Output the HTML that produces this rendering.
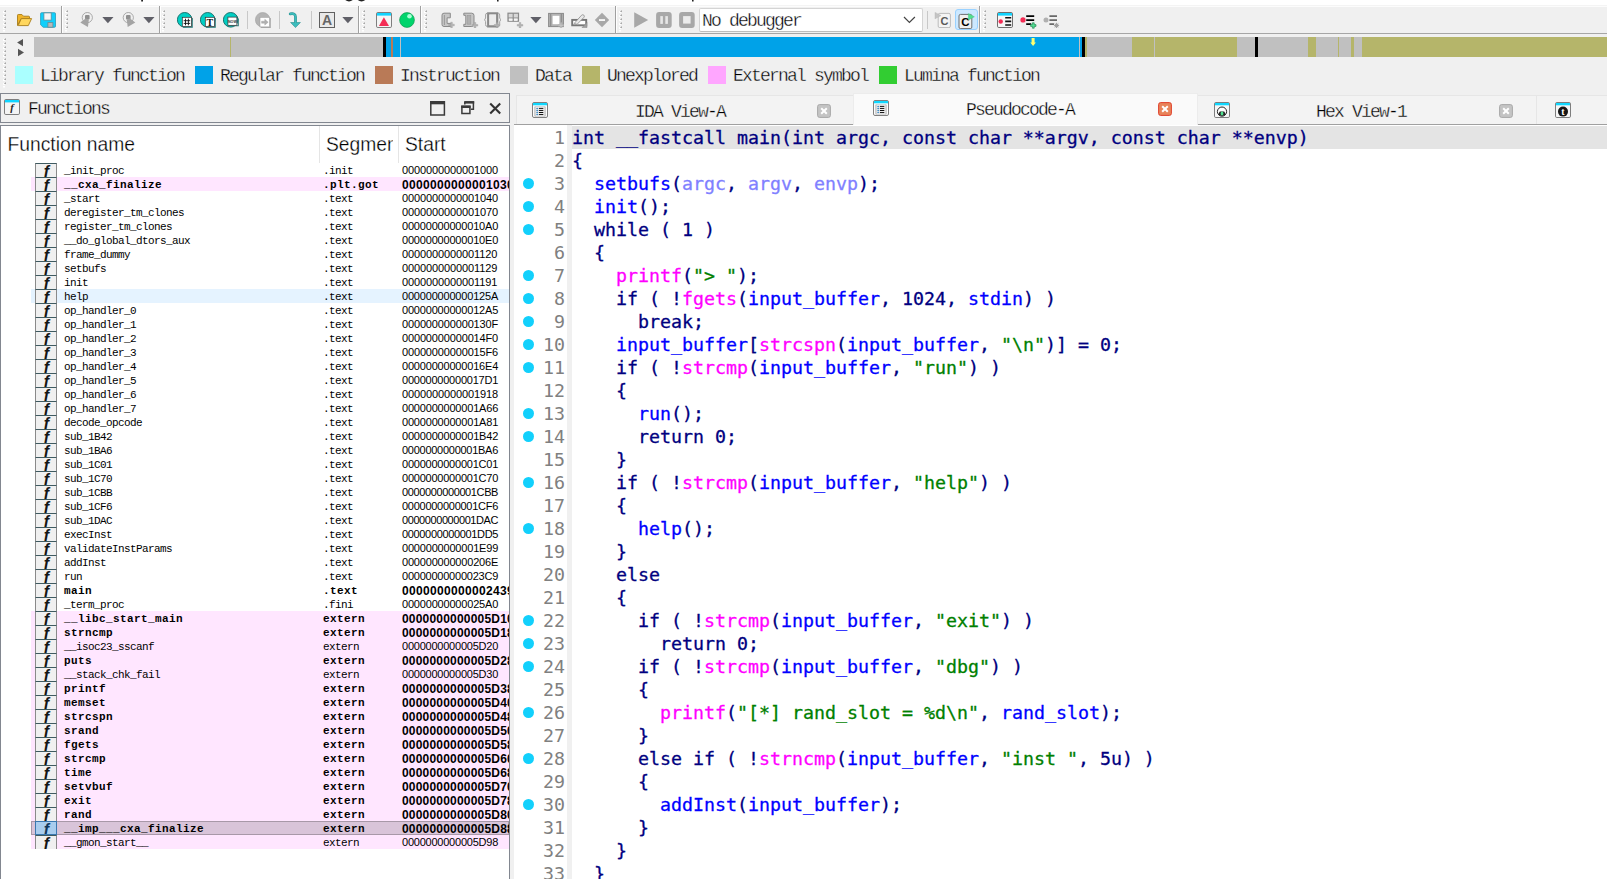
<!DOCTYPE html>
<html lang="en"><head><meta charset="utf-8"><title>IDA - main pseudocode</title>
<style>
html,body{margin:0;padding:0}
body{width:1607px;height:879px;overflow:hidden;background:#f0f0f0;position:relative;font-family:"Liberation Mono",monospace;color:#000}
div,span,i,svg{position:absolute;display:block;box-sizing:border-box}
i{font-style:normal}
#topstrip{left:0;top:0;width:1607px;height:5px;background:#fff}
#tbline{left:0;top:33px;width:1607px;height:1px;background:#a6a6a6}
.vsep{top:6px;width:2px;height:27px;border-left:1px solid #a0a0a0;border-right:1px solid #fff}
.tsep{top:11px;width:1px;height:18px;background:#c8c8c8}
.grip{width:3px;height:22px;top:9px}
.ui{font-family:"Liberation Mono",monospace;font-size:18px;letter-spacing:-1.8px;line-height:18px;white-space:pre;color:#000;-webkit-text-stroke:0.35px #f0f0f0}
/* nav band */
#nav{left:34px;top:37px;width:1573px;height:20px;background:#c0c0c0}
#nav i{top:0;height:20px}
/* legend */
#legend{left:0;top:0;width:1607px;height:0}
.sw{top:66px;width:18px;height:18px}
/* functions panel */
#ftitle{left:0;top:93px;width:510px;height:30px;border:1px solid #828790;background:#f0f0f0}
#flist{left:0;top:125px;width:510px;height:760px;border:1px solid #828790;background:#fff}
.hd{font-family:"Liberation Sans",sans-serif;font-size:19.3px;line-height:22px;top:134px;white-space:pre;color:#000;-webkit-text-stroke:0.3px #fff}
.hsep{top:126px;width:1px;height:37px;background:#e5e5e5}
#rows{left:0;top:0;width:509px;height:879px;overflow:hidden;clip-path:inset(0 0 0 0)}
.r{left:31px;width:478px;height:14px;font-size:11px;letter-spacing:-0.6px;line-height:14px;white-space:pre;overflow:hidden}
.r.pink{background:#ffe6ff}
.r.hl{background:#e5f3ff}
.r.sel{background:#d9c4d9;box-shadow:inset 0 0 0 1px #a898a8}
.r span{top:1px;height:14px}
.r .n{left:33px}
.r .sg{left:292px}
.r .a{left:371px;font-family:"Liberation Sans",sans-serif;font-size:11px;letter-spacing:-0.12px}
.r .a{margin-top:-1px}
.r.b .a{font-size:12px;letter-spacing:0.33px;margin-top:0}
.r.b{font-weight:bold;font-size:11px;letter-spacing:0.4px}
.fi{left:4px;top:0;width:22px;height:14px;border-left:1px solid #8a8a8a;border-right:1px solid #8a8a8a;border-top:1px solid #3f5a60;background:#f0f0f0;font-family:"Liberation Sans",sans-serif;font-style:italic;font-weight:bold;font-size:16px;line-height:15px;text-align:center;letter-spacing:0;color:#151515;overflow:hidden;padding-left:1px}
.r.sel .fi{background:#a9cdee;border-color:#3a78b0;border-bottom:1px solid #3a78b0;color:#12385a}
/* tabs */
.tab{top:95px;height:29px;background:#f3f3f3;border-top:1px solid #e6e6e6;border-left:1px solid #e6e6e6}
.tab.act{top:93px;height:33px;background:#fafafa;border:1px solid #ececec;border-bottom:none}
#tabline{left:514px;top:124px;width:1093px;height:1px;background:#a0a0a0}
/* code */
#code{left:514px;top:125px;width:1093px;height:754px;background:#fff}
#gut{left:53px;top:0;width:5px;height:754px;background:#f0f0f0}
.ln{left:-514px;width:1607px;height:23px;margin-top:-125px;font-family:"DejaVu Sans Mono","Liberation Mono",monospace;font-size:18.27px;line-height:23px;white-space:pre}
.ln.l1 .tx{background:#e4e4e4;width:1035px}
.ln .tx{left:572px;top:0;height:23px;-webkit-text-stroke:0.3px}
.ln .tx span{position:static;display:inline}
.ln .no{left:520px;width:45px;text-align:right;color:#808080;top:0;height:23px}
.dot{left:523px;top:6px;width:11px;height:11px;border-radius:50%;background:#12d0fc}
.k{color:#000080}.f{color:#ff00ff}.g{color:#0000ff}.s{color:#008000}.p{color:#8080ff}
#combo{left:699px;top:8px;width:224px;height:24px;background:#fff;border:1px solid #d4d4d4;border-bottom-color:#bdbdbd;border-radius:2px}
#cact{left:955px;top:9px;width:23px;height:21px;background:#cce8ff;border:1px solid #99d1ff;border-radius:3px}
#tbhl{left:0;top:5px;width:1607px;height:2px;background:#fcfcfc;border-top:1px solid #f4f4f4}

</style></head>
<body>
<div id="topstrip"></div>
<svg style="left:0px;top:0px" width="800" height="3" viewBox="0 0 800 3"><path d="M141.2 0h1.8v1.6h-1.800z M497 0h1.600v1.400h-1.600z M692 0h1.600v1.400h-1.600z" fill="#222"/><path d="M344.500 -1.500q4.500 4.500 9 0M357 -1.500q4.500 4.500 9 0" fill="none" stroke="#222" stroke-width="1.300"/></svg>
<svg style="left:3.2px;top:9px" width="4" height="24" viewBox="0 0 4 24"><rect x="0" y="2" width="2" height="2" fill="#fff"/><path d="M2.900 0.9v2h-2z" fill="#9c9c9c"/><rect x="0" y="6" width="2" height="2" fill="#fff"/><path d="M2.900 4.9v2h-2z" fill="#9c9c9c"/><rect x="0" y="10" width="2" height="2" fill="#fff"/><path d="M2.900 8.9v2h-2z" fill="#9c9c9c"/><rect x="0" y="14" width="2" height="2" fill="#fff"/><path d="M2.900 12.9v2h-2z" fill="#9c9c9c"/><rect x="0" y="18" width="2" height="2" fill="#fff"/><path d="M2.900 16.9v2h-2z" fill="#9c9c9c"/><rect x="0" y="21" width="2" height="1.5" fill="#fff"/></svg>
<svg style="left:3.2px;top:37px" width="4" height="52" viewBox="0 0 4 52"><rect x="0" y="2" width="2" height="2" fill="#fff"/><path d="M2.900 0.9v2h-2z" fill="#9c9c9c"/><rect x="0" y="6" width="2" height="2" fill="#fff"/><path d="M2.900 4.9v2h-2z" fill="#9c9c9c"/><rect x="0" y="10" width="2" height="2" fill="#fff"/><path d="M2.900 8.9v2h-2z" fill="#9c9c9c"/><rect x="0" y="14" width="2" height="2" fill="#fff"/><path d="M2.900 12.9v2h-2z" fill="#9c9c9c"/><rect x="0" y="18" width="2" height="2" fill="#fff"/><path d="M2.900 16.9v2h-2z" fill="#9c9c9c"/><rect x="0" y="22" width="2" height="2" fill="#fff"/><path d="M2.900 20.9v2h-2z" fill="#9c9c9c"/><rect x="0" y="26" width="2" height="2" fill="#fff"/><path d="M2.900 24.9v2h-2z" fill="#9c9c9c"/><rect x="0" y="30" width="2" height="2" fill="#fff"/><path d="M2.900 28.9v2h-2z" fill="#9c9c9c"/><rect x="0" y="34" width="2" height="2" fill="#fff"/><path d="M2.900 32.9v2h-2z" fill="#9c9c9c"/><rect x="0" y="38" width="2" height="2" fill="#fff"/><path d="M2.900 36.9v2h-2z" fill="#9c9c9c"/><rect x="0" y="42" width="2" height="2" fill="#fff"/><path d="M2.900 40.9v2h-2z" fill="#9c9c9c"/><rect x="0" y="46" width="2" height="2" fill="#fff"/><path d="M2.900 44.9v2h-2z" fill="#9c9c9c"/><rect x="0" y="49" width="2" height="1.5" fill="#fff"/></svg>
<i id="tbhl"></i><svg style="left:16px;top:13px" width="17" height="14" viewBox="0 0 17 14"><path d="M1.5 12.5V2.3q0-.8.8-.8h3.6l1.6 1.7h5.2q.8 0 .8.8v1.5H5.2L1.5 12.5z" fill="#f0b428" stroke="#a87d18" stroke-width=".9" stroke-linejoin="round"/><path d="M2.2 12.6L5.3 5.6h10.3l-3.3 7z" fill="#ffd75e" stroke="#a87d18" stroke-width=".9" stroke-linejoin="round"/></svg>
<svg style="left:40px;top:12px" width="16" height="16" viewBox="0 0 16 16"><path d="M1.5 .7h13q1 0 1 1v12.6q0 1-1 1H3.2L.6 12.8V1.7q0-1 .9-1z" fill="#10d0fc" stroke="#2a9ab8" stroke-width=".8"/><rect x="3.9" y=".9" width="7.3" height="7.2" fill="#f4f4f4" stroke="#5a8a98" stroke-width=".8"/><rect x="7.9" y="10.6" width="5" height="4.6" fill="#b8b8b8" stroke="#6a8a94" stroke-width=".8"/></svg>
<i class="vsep" style="left:61px"></i>
<svg style="left:65.2px;top:9px" width="4" height="24" viewBox="0 0 4 24"><rect x="0" y="2" width="2" height="2" fill="#fff"/><path d="M2.900 0.9v2h-2z" fill="#9c9c9c"/><rect x="0" y="6" width="2" height="2" fill="#fff"/><path d="M2.900 4.9v2h-2z" fill="#9c9c9c"/><rect x="0" y="10" width="2" height="2" fill="#fff"/><path d="M2.900 8.9v2h-2z" fill="#9c9c9c"/><rect x="0" y="14" width="2" height="2" fill="#fff"/><path d="M2.900 12.9v2h-2z" fill="#9c9c9c"/><rect x="0" y="18" width="2" height="2" fill="#fff"/><path d="M2.900 16.9v2h-2z" fill="#9c9c9c"/><rect x="0" y="21" width="2" height="1.5" fill="#fff"/></svg>
<svg style="left:79.5px;top:11.8px" width="14" height="16" viewBox="0 0 14 16"><circle cx="7.3" cy="5.6" r="5.1" fill="none" stroke="#8c8c8c" stroke-width=".7"/><rect x="5" y="3" width="4.6" height="4.6" rx="1" fill="#909090"/><path d="M5.6 6.5L8.9 7.6 7.9 15 .3 10.4z" fill="#a4a4a4"/></svg>
<svg style="left:101.6px;top:17px" width="12" height="7" viewBox="0 0 12 7"><path d="M0.3 0h11.2L5.9 6.2z" fill="#606068"/></svg>
<svg style="left:122.3px;top:11.8px" width="14" height="16" viewBox="0 0 14 16"><g transform="translate(13.6,0) scale(-1,1)"><circle cx="7.3" cy="5.6" r="5.1" fill="none" stroke="#8c8c8c" stroke-width=".7"/><rect x="5" y="3" width="4.6" height="4.6" rx="1" fill="#909090"/><path d="M5.6 6.5L8.9 7.6 7.9 15 .3 10.4z" fill="#a4a4a4"/></g></svg>
<svg style="left:142.7px;top:17px" width="12" height="7" viewBox="0 0 12 7"><path d="M0.3 0h11.2L5.9 6.2z" fill="#606068"/></svg>
<i class="vsep" style="left:159px"></i>
<svg style="left:162.2px;top:9px" width="4" height="24" viewBox="0 0 4 24"><rect x="0" y="2" width="2" height="2" fill="#fff"/><path d="M2.900 0.9v2h-2z" fill="#9c9c9c"/><rect x="0" y="6" width="2" height="2" fill="#fff"/><path d="M2.900 4.9v2h-2z" fill="#9c9c9c"/><rect x="0" y="10" width="2" height="2" fill="#fff"/><path d="M2.900 8.9v2h-2z" fill="#9c9c9c"/><rect x="0" y="14" width="2" height="2" fill="#fff"/><path d="M2.900 12.9v2h-2z" fill="#9c9c9c"/><rect x="0" y="18" width="2" height="2" fill="#fff"/><path d="M2.900 16.9v2h-2z" fill="#9c9c9c"/><rect x="0" y="21" width="2" height="1.5" fill="#fff"/></svg>
<svg style="left:177px;top:12px" width="16" height="16" viewBox="0 0 16 16"><circle cx="7.7" cy="7.8" r="7.3" fill="#00cfc4" stroke="#1a7470" stroke-width="1"/><rect x="6" y="6" width="9.8" height="9.8" fill="#2f7f7f"/><rect x="5.3" y="5.3" width="9.2" height="9.2" fill="#fff" stroke="#333" stroke-width=".7"/><path d="M8.5 6.7v6.6M11.4 6.7v6.6M6.7 8.7h6.5M6.7 11.4h6.5" stroke="#111" stroke-width=".9"/></svg>
<svg style="left:200px;top:12px" width="16" height="16" viewBox="0 0 16 16"><circle cx="7.7" cy="7.8" r="7.3" fill="#00cfc4" stroke="#1a7470" stroke-width="1"/><rect x="6" y="6" width="9.8" height="9.8" fill="#2f7f7f"/><rect x="5.3" y="5.3" width="9.2" height="9.2" fill="#fff" stroke="#333" stroke-width=".7"/><text x="9.9" y="13.6" font-family="Liberation Serif,serif" font-size="10" font-weight="bold" text-anchor="middle" fill="#111">T</text></svg>
<svg style="left:223px;top:12px" width="16" height="16" viewBox="0 0 16 16"><circle cx="7.7" cy="7.8" r="7.3" fill="#00cfc4" stroke="#1a7470" stroke-width="1"/><path d="M5 14.2h10.8V6.5h-1v6.7H5z" fill="#2f7f7f"/><rect x="4.9" y="5.1" width="9" height="8.2" fill="#fff" stroke="#333" stroke-width=".7"/><text x="9.4" y="10.6" font-family="Liberation Sans,sans-serif" font-size="3.6" font-weight="bold" text-anchor="middle" fill="#333">NOW</text></svg>
<i class="tsep" style="left:247px"></i>
<svg style="left:255px;top:12px" width="16" height="16" viewBox="0 0 16 16"><circle cx="7.7" cy="7.8" r="7.3" fill="#b4b4b4" stroke="#a0a0a0" stroke-width=".6"/><rect x="5.8" y="6" width="10" height="10" fill="#a8a8a8"/><rect x="5" y="5.3" width="9.6" height="9.6" fill="#fff" stroke="#a0a0a0" stroke-width=".6"/><path d="M6.6 9.2h3.2V7.3l3.4 2.9-3.4 2.9v-1.9H6.6z" fill="#b0b0b0" stroke="#999" stroke-width=".4"/></svg>
<i class="tsep" style="left:279px"></i>
<svg style="left:288px;top:12px" width="14" height="16" viewBox="0 0 14 16"><path d="M2.200 1.900q5.300-1 5.300 3.200v6" fill="none" stroke="#2a8f8f" stroke-width="2.700" stroke-linecap="round"/><path d="M2.600 10.500h9.800L7.500 15.600z" fill="#3cbcbc" stroke="#2a8f8f" stroke-width=".6" stroke-linejoin="round"/><path d="M2.200 1.900q5.300-1 5.300 3.200v6" fill="none" stroke="#3cbcbc" stroke-width="1.700" stroke-linecap="round"/></svg>
<i class="tsep" style="left:311px"></i>
<svg style="left:319px;top:12px" width="16" height="16" viewBox="0 0 16 16"><rect x=".5" y=".5" width="15" height="15" fill="#e9e9e9" stroke="#606060" stroke-width="1"/><text x="8" y="13.2" font-family="Liberation Sans,sans-serif" font-size="14" font-weight="bold" text-anchor="middle" fill="#666">A</text></svg>
<svg style="left:341.5px;top:17px" width="12" height="7" viewBox="0 0 12 7"><path d="M0.3 0h11.2L5.9 6.2z" fill="#606068"/></svg>
<i class="vsep" style="left:358px"></i>
<svg style="left:362.2px;top:9px" width="4" height="24" viewBox="0 0 4 24"><rect x="0" y="2" width="2" height="2" fill="#fff"/><path d="M2.900 0.9v2h-2z" fill="#9c9c9c"/><rect x="0" y="6" width="2" height="2" fill="#fff"/><path d="M2.900 4.9v2h-2z" fill="#9c9c9c"/><rect x="0" y="10" width="2" height="2" fill="#fff"/><path d="M2.900 8.9v2h-2z" fill="#9c9c9c"/><rect x="0" y="14" width="2" height="2" fill="#fff"/><path d="M2.900 12.9v2h-2z" fill="#9c9c9c"/><rect x="0" y="18" width="2" height="2" fill="#fff"/><path d="M2.900 16.9v2h-2z" fill="#9c9c9c"/><rect x="0" y="21" width="2" height="1.5" fill="#fff"/></svg>
<svg style="left:376px;top:12px" width="16" height="16" viewBox="0 0 16 16"><rect x=".5" y=".5" width="15" height="15" rx="1.3" fill="#f4f4f4" stroke="#707070" stroke-width=".9"/><rect x="1" y="1" width="14" height="2.6" fill="#10d4ff"/><path d="M7.9 5.3L13 13.9H2.9z" fill="#f42d55"/></svg>
<svg style="left:399px;top:12px" width="16" height="16" viewBox="0 0 16 16"><circle cx="8" cy="8" r="7.4" fill="#00d46c" stroke="#109a50" stroke-width=".7"/><circle cx="10.5" cy="4.2" r="2.3" fill="#a8ffd4"/></svg>
<i class="vsep" style="left:420px"></i>
<svg style="left:424.2px;top:9px" width="4" height="24" viewBox="0 0 4 24"><rect x="0" y="2" width="2" height="2" fill="#fff"/><path d="M2.900 0.9v2h-2z" fill="#9c9c9c"/><rect x="0" y="6" width="2" height="2" fill="#fff"/><path d="M2.900 4.9v2h-2z" fill="#9c9c9c"/><rect x="0" y="10" width="2" height="2" fill="#fff"/><path d="M2.900 8.9v2h-2z" fill="#9c9c9c"/><rect x="0" y="14" width="2" height="2" fill="#fff"/><path d="M2.900 12.9v2h-2z" fill="#9c9c9c"/><rect x="0" y="18" width="2" height="2" fill="#fff"/><path d="M2.900 16.9v2h-2z" fill="#9c9c9c"/><rect x="0" y="21" width="2" height="1.5" fill="#fff"/></svg>
<svg style="left:441px;top:12px" width="16" height="16" viewBox="0 0 16 16"><path d="M1 3.2q0-2 2-2h6.3v4.6H6.1v5.6h3.4v3.1H3q-2 0-2-2z" fill="#c6c6c6" stroke="#8a8a8a" stroke-width="1"/><path d="M3.4 3v10" stroke="#9a9a9a" stroke-width="1"/><path d="M7.7 12.2h2v-2h1.6v2h2v1.6h-2v2h-1.6v-2h-2z" fill="#b4b4b4" stroke="#9a9a9a" stroke-width=".4"/></svg>
<svg style="left:463px;top:12px" width="16" height="16" viewBox="0 0 16 16"><path d="M.8 1.2h8q2.2 0 2.2 2.4v8.6q0 2.3-2.2 2.3h-8v-2.2h2v-9h-2z" fill="#c6c6c6" stroke="#8a8a8a" stroke-width="1"/><rect x="4.6" y="3.4" width="3.2" height="8.8" fill="#b0b0b0" stroke="#9a9a9a" stroke-width=".6"/><path d="M9.2 12.5h2v-2h1.6v2h2v1.6h-2v2h-1.6v-2h-2z" fill="#b4b4b4" stroke="#9a9a9a" stroke-width=".4"/></svg>
<svg style="left:484px;top:12px" width="17" height="16" viewBox="0 0 17 16"><path d="M4.2 1.3h9v13h-9z" fill="none" stroke="#8a8a8a" stroke-width="2.2"/><path d="M3 1.3Q1.6 1.3 1.6 3v3L.6 7.8l1 1.8v3q0 1.8 1.4 1.8M14.3 1.3q1.4 0 1.4 1.700v3l1 1.800-1 1.8v3q0 1.800-1.400 1.800" fill="none" stroke="#a0a0a0" stroke-width="1"/><rect x="5.4" y="2.6" width="6.600" height="10.4" fill="#ececec"/><path d="M10.2 12.5h2v-2h1.6v2h2v1.6h-2v2h-1.6v-2h-2z" fill="#b4b4b4" stroke="#9a9a9a" stroke-width=".4"/></svg>
<svg style="left:507px;top:12px" width="17" height="16" viewBox="0 0 17 16"><rect x="1" y="1.200" width="10.500" height="8" fill="#d8d8d8" stroke="#8a8a8a" stroke-width="1.200"/><path d="M6.200 1.200v8M1 6h10.500" stroke="#8a8a8a" stroke-width="1.100"/><rect x="2" y="6.600" width="3.400" height="2.200" fill="#f4f4f4"/><rect x="7" y="6.600" width="3.400" height="2.200" fill="#f4f4f4"/><path d="M10.2 12.5h2v-2h1.6v2h2v1.6h-2v2h-1.6v-2h-2z" fill="#b4b4b4" stroke="#9a9a9a" stroke-width=".4"/></svg>
<svg style="left:529.8px;top:17px" width="12" height="7" viewBox="0 0 12 7"><path d="M0.3 0h11.2L5.9 6.2z" fill="#606068"/></svg>
<svg style="left:548px;top:12px" width="16" height="16" viewBox="0 0 16 16"><rect x=".6" y="1.400" width="14.800" height="13.200" fill="#b4b4b4" stroke="#8a8a8a" stroke-width="1"/><path d="M2.600 1.400v13.200M13.400 1.400v13.200" stroke="#8f8f8f" stroke-width="1.400"/><rect x="4.600" y="3.800" width="6.800" height="8.400" fill="#fff"/><path d="M10.2 12.6h2v-2h1.6v2h2v1.6h-2v2h-1.6v-2h-2z" fill="#c4c4c4" stroke="#aaa" stroke-width=".4"/></svg>
<svg style="left:571px;top:12px" width="17" height="16" viewBox="0 0 17 16"><rect x="1.200" y="7.900" width="14" height="5.400" fill="#fff" stroke="#767676" stroke-width="1.900"/><path d="M11 15.600h5v-5z" fill="#a0a0a0" stroke="#808080" stroke-width=".5"/><path d="M3.200 11.400L10.600 3.200q1.300-1 2.300 0t0 2.200L6 12.400z" fill="#e8e8e8" stroke="#8a8a8a" stroke-width=".8"/></svg>
<svg style="left:594px;top:12px" width="16" height="16" viewBox="0 0 16 16"><path d="M8 .8L15.200 8 8 15.200.8 8z" fill="#a8a8a8"/><rect x="5" y="7.200" width="6" height="1.700" fill="#fff"/></svg>
<i class="vsep" style="left:615px"></i>
<svg style="left:619.2px;top:9px" width="4" height="24" viewBox="0 0 4 24"><rect x="0" y="2" width="2" height="2" fill="#fff"/><path d="M2.900 0.9v2h-2z" fill="#9c9c9c"/><rect x="0" y="6" width="2" height="2" fill="#fff"/><path d="M2.900 4.9v2h-2z" fill="#9c9c9c"/><rect x="0" y="10" width="2" height="2" fill="#fff"/><path d="M2.900 8.9v2h-2z" fill="#9c9c9c"/><rect x="0" y="14" width="2" height="2" fill="#fff"/><path d="M2.900 12.9v2h-2z" fill="#9c9c9c"/><rect x="0" y="18" width="2" height="2" fill="#fff"/><path d="M2.900 16.9v2h-2z" fill="#9c9c9c"/><rect x="0" y="21" width="2" height="1.5" fill="#fff"/></svg>
<svg style="left:634px;top:12px" width="15" height="16" viewBox="0 0 15 16"><path d="M.2 .2v15.600L14.200 8z" fill="#a8a8a8"/></svg>
<svg style="left:656px;top:12px" width="16" height="16" viewBox="0 0 16 16"><rect x=".1" y=".1" width="15.600" height="15.800" rx="3" fill="#a8a8a8"/><rect x="4.300" y="4.100" width="2.600" height="7.800" fill="#e6e6e6"/><rect x="9.300" y="4.100" width="2.600" height="7.800" fill="#e6e6e6"/></svg>
<svg style="left:679px;top:12px" width="16" height="16" viewBox="0 0 16 16"><rect x=".1" y=".1" width="15.600" height="15.800" rx="3" fill="#a8a8a8"/><rect x="4.100" y="4.100" width="7.500" height="7.500" fill="#ececec"/></svg>
<div id="combo"></div><span class="ui" style="left:702px;top:12px;-webkit-text-stroke-color:#fff">No debugger</span>
<svg style="left:903px;top:16px" width="13" height="8" viewBox="0 0 13 8"><path d="M1 1l5.400 5.400L11.900 1" fill="none" stroke="#444" stroke-width="1.200"/></svg>
<i class="tsep" style="left:927px"></i>
<svg style="left:934px;top:12px" width="17" height="16" viewBox="0 0 17 16"><rect x="4.200" y="1.400" width="12.200" height="14.200" rx="1.500" fill="#f4f4f4" stroke="#b4b4b4" stroke-width=".9"/><path d="M1 .4v6.400L7 3.600z" fill="#c4c4c4" stroke="#b0b0b0" stroke-width=".4"/><text x="10.500" y="12.500" font-family="Liberation Sans,sans-serif" font-size="11" font-weight="bold" text-anchor="middle" fill="#5a5a5a">C</text></svg>
<div id="cact"></div>
<svg style="left:958px;top:12px" width="18" height="17" viewBox="0 0 18 17"><rect x="1" y="2.400" width="12.800" height="14.200" rx="1.500" fill="#f0f0f0" stroke="#606060" stroke-width=".9"/><text x="7.300" y="13.600" font-family="Liberation Sans,sans-serif" font-size="11.500" font-weight="bold" text-anchor="middle" fill="#000">C</text><path d="M10.400 1.600v6.400l6-3.200z" fill="#50e090" stroke="#40c078" stroke-width=".4"/></svg>
<i class="vsep" style="left:979px"></i>
<svg style="left:983.2px;top:9px" width="4" height="24" viewBox="0 0 4 24"><rect x="0" y="2" width="2" height="2" fill="#fff"/><path d="M2.900 0.9v2h-2z" fill="#9c9c9c"/><rect x="0" y="6" width="2" height="2" fill="#fff"/><path d="M2.900 4.9v2h-2z" fill="#9c9c9c"/><rect x="0" y="10" width="2" height="2" fill="#fff"/><path d="M2.900 8.9v2h-2z" fill="#9c9c9c"/><rect x="0" y="14" width="2" height="2" fill="#fff"/><path d="M2.900 12.9v2h-2z" fill="#9c9c9c"/><rect x="0" y="18" width="2" height="2" fill="#fff"/><path d="M2.900 16.9v2h-2z" fill="#9c9c9c"/><rect x="0" y="21" width="2" height="1.5" fill="#fff"/></svg>
<svg style="left:997px;top:12px" width="16" height="16" viewBox="0 0 16 16"><rect x=".5" y=".5" width="15" height="15" rx="1.300" fill="#f6f6f6" stroke="#606060" stroke-width=".9"/><rect x="1" y="1" width="14" height="2.600" fill="#10d4ff"/><circle cx="3.700" cy="9.500" r="2.200" fill="#f42d55"/><path d="M8.200 5.800h6M8.200 9.400h6M8.200 13h6" stroke="#111" stroke-width="1.600"/></svg>
<svg style="left:1020px;top:12px" width="18" height="17" viewBox="0 0 18 17"><circle cx="3" cy="7.900" r="2.600" fill="#f42d55"/><path d="M6.200 4.100h8M6.200 8.100h8M6.200 12.100h5" stroke="#000" stroke-width="1.800"/><path d="M10.600 12.600h1.800v-1.800h1.800v1.800h1.800v1.800h-1.800v1.800h-1.800v-1.800h-1.800z" fill="#50e090" stroke="#2a8a5a" stroke-width=".7"/></svg>
<svg style="left:1043px;top:12px" width="18" height="17" viewBox="0 0 18 17"><circle cx="3" cy="7.900" r="2.500" fill="#b0b0b0"/><path d="M6.400 4.100h7.600M6.400 8.100h7.600M6.400 12.100h4.600" stroke="#686868" stroke-width="1.700"/><circle cx="13.500" cy="13.400" r="2" fill="#a0a0a0"/><path d="M13.500 10.800v5.200M10.900 13.400h5.200M11.700 11.600l3.600 3.600M15.300 11.600l-3.600 3.600" stroke="#a0a0a0" stroke-width="1"/></svg>
<div id="tbline"></div>
<svg style="left:16px;top:38px" width="9" height="19" viewBox="0 0 9 19"><path d="M7 0.9v7.400L1.100 4.600z M2 10.800v7.500L8 14.500z" fill="#555"/></svg>
<div id="nav">
<i style="left:196px;width:1px;background:#b5b56a"></i>
<i style="left:349px;width:3px;background:#000"></i>
<i style="left:352px;width:696px;background:#00a2e8"></i>
<i style="left:356.5px;width:2px;background:#b97a57"></i>
<i style="left:366px;width:1px;background:#c0c0c0"></i>
<i style="left:1045px;width:1px;background:#c0c0c0"></i>
<i style="left:1048px;width:3px;background:#000"></i>
<i style="left:1051px;width:2px;background:#b5b56a"></i>
<i style="left:1098px;width:105px;background:#b5b56a"></i>
<i style="left:1120px;width:1px;background:#c0c0c0"></i>
<i style="left:1221px;width:3px;background:#000"></i>
<i style="left:1274px;width:8px;background:#b5b56a"></i>
<i style="left:1304px;width:1px;background:#b5b56a"></i>
<i style="left:1317px;width:3px;background:#b5b56a"></i>
<i style="left:1328px;width:245px;background:#b5b56a"></i>
<svg style="left:995.9px;top:1.2px" width="7" height="9" viewBox="0 0 7 9"><path d="M1.600 0h3v4.600h1.300L3.100 7.900 .3 4.600h1.300z" fill="#ffff70"/></svg>
</div>
<div id="legend"><i class="sw" style="left:15px;background:#aaffff"></i><span class="ui" style="left:40px;top:67px">Library function</span><i class="sw" style="left:195px;background:#00a2e8"></i><span class="ui" style="left:220px;top:67px">Regular function</span><i class="sw" style="left:375px;background:#b97a57"></i><span class="ui" style="left:400px;top:67px">Instruction</span><i class="sw" style="left:510px;background:#c0c0c0"></i><span class="ui" style="left:535px;top:67px">Data</span><i class="sw" style="left:582px;background:#b5b56a"></i><span class="ui" style="left:607px;top:67px">Unexplored</span><i class="sw" style="left:708px;background:#ffa6ff"></i><span class="ui" style="left:733px;top:67px">External symbol</span><i class="sw" style="left:879px;background:#32cd32"></i><span class="ui" style="left:904px;top:67px">Lumina function</span></div>
<div id="ftitle"></div>
<span class="ui" style="left:28px;top:100px">Functions</span>
<div id="flist"></div>
<span class="hd" style="left:7.5px">Function name</span>
<span class="hd" style="left:326px;width:67px;overflow:hidden">Segment</span>
<span class="hd" style="left:405px">Start</span>
<i class="hsep" style="left:319px"></i><i class="hsep" style="left:398px"></i>
<div id="rows">
<div class="r" style="top:163px"><i class="fi">f</i><span class="n">_init_proc</span><span class="sg">.init</span><span class="a" style="letter-spacing:-0.12px">0000000000001000</span></div>
<div class="r b pink" style="top:177px"><i class="fi">f</i><span class="n">__cxa_finalize</span><span class="sg">.plt.got</span><span class="a" style="letter-spacing:0.33px">0000000000001030</span></div>
<div class="r" style="top:191px"><i class="fi">f</i><span class="n">_start</span><span class="sg">.text</span><span class="a" style="letter-spacing:-0.12px">0000000000001040</span></div>
<div class="r" style="top:205px"><i class="fi">f</i><span class="n">deregister_tm_clones</span><span class="sg">.text</span><span class="a" style="letter-spacing:-0.12px">0000000000001070</span></div>
<div class="r" style="top:219px"><i class="fi">f</i><span class="n">register_tm_clones</span><span class="sg">.text</span><span class="a" style="letter-spacing:-0.19px">00000000000010A0</span></div>
<div class="r" style="top:233px"><i class="fi">f</i><span class="n">__do_global_dtors_aux</span><span class="sg">.text</span><span class="a" style="letter-spacing:-0.19px">00000000000010E0</span></div>
<div class="r" style="top:247px"><i class="fi">f</i><span class="n">frame_dummy</span><span class="sg">.text</span><span class="a" style="letter-spacing:-0.12px">0000000000001120</span></div>
<div class="r" style="top:261px"><i class="fi">f</i><span class="n">setbufs</span><span class="sg">.text</span><span class="a" style="letter-spacing:-0.12px">0000000000001129</span></div>
<div class="r" style="top:275px"><i class="fi">f</i><span class="n">init</span><span class="sg">.text</span><span class="a" style="letter-spacing:-0.12px">0000000000001191</span></div>
<div class="r hl" style="top:289px"><i class="fi">f</i><span class="n">help</span><span class="sg">.text</span><span class="a" style="letter-spacing:-0.19px">000000000000125A</span></div>
<div class="r" style="top:303px"><i class="fi">f</i><span class="n">op_handler_0</span><span class="sg">.text</span><span class="a" style="letter-spacing:-0.19px">00000000000012A5</span></div>
<div class="r" style="top:317px"><i class="fi">f</i><span class="n">op_handler_1</span><span class="sg">.text</span><span class="a" style="letter-spacing:-0.15px">000000000000130F</span></div>
<div class="r" style="top:331px"><i class="fi">f</i><span class="n">op_handler_2</span><span class="sg">.text</span><span class="a" style="letter-spacing:-0.15px">00000000000014F0</span></div>
<div class="r" style="top:345px"><i class="fi">f</i><span class="n">op_handler_3</span><span class="sg">.text</span><span class="a" style="letter-spacing:-0.15px">00000000000015F6</span></div>
<div class="r" style="top:359px"><i class="fi">f</i><span class="n">op_handler_4</span><span class="sg">.text</span><span class="a" style="letter-spacing:-0.19px">00000000000016E4</span></div>
<div class="r" style="top:373px"><i class="fi">f</i><span class="n">op_handler_5</span><span class="sg">.text</span><span class="a" style="letter-spacing:-0.23px">00000000000017D1</span></div>
<div class="r" style="top:387px"><i class="fi">f</i><span class="n">op_handler_6</span><span class="sg">.text</span><span class="a" style="letter-spacing:-0.12px">0000000000001918</span></div>
<div class="r" style="top:401px"><i class="fi">f</i><span class="n">op_handler_7</span><span class="sg">.text</span><span class="a" style="letter-spacing:-0.19px">0000000000001A66</span></div>
<div class="r" style="top:415px"><i class="fi">f</i><span class="n">decode_opcode</span><span class="sg">.text</span><span class="a" style="letter-spacing:-0.19px">0000000000001A81</span></div>
<div class="r" style="top:429px"><i class="fi">f</i><span class="n">sub_1B42</span><span class="sg">.text</span><span class="a" style="letter-spacing:-0.19px">0000000000001B42</span></div>
<div class="r" style="top:443px"><i class="fi">f</i><span class="n">sub_1BA6</span><span class="sg">.text</span><span class="a" style="letter-spacing:-0.27px">0000000000001BA6</span></div>
<div class="r" style="top:457px"><i class="fi">f</i><span class="n">sub_1C01</span><span class="sg">.text</span><span class="a" style="letter-spacing:-0.23px">0000000000001C01</span></div>
<div class="r" style="top:471px"><i class="fi">f</i><span class="n">sub_1C70</span><span class="sg">.text</span><span class="a" style="letter-spacing:-0.23px">0000000000001C70</span></div>
<div class="r" style="top:485px"><i class="fi">f</i><span class="n">sub_1CBB</span><span class="sg">.text</span><span class="a" style="letter-spacing:-0.38px">0000000000001CBB</span></div>
<div class="r" style="top:499px"><i class="fi">f</i><span class="n">sub_1CF6</span><span class="sg">.text</span><span class="a" style="letter-spacing:-0.27px">0000000000001CF6</span></div>
<div class="r" style="top:513px"><i class="fi">f</i><span class="n">sub_1DAC</span><span class="sg">.text</span><span class="a" style="letter-spacing:-0.42px">0000000000001DAC</span></div>
<div class="r" style="top:527px"><i class="fi">f</i><span class="n">execInst</span><span class="sg">.text</span><span class="a" style="letter-spacing:-0.34px">0000000000001DD5</span></div>
<div class="r" style="top:541px"><i class="fi">f</i><span class="n">validateInstParams</span><span class="sg">.text</span><span class="a" style="letter-spacing:-0.19px">0000000000001E99</span></div>
<div class="r" style="top:555px"><i class="fi">f</i><span class="n">addInst</span><span class="sg">.text</span><span class="a" style="letter-spacing:-0.19px">000000000000206E</span></div>
<div class="r" style="top:569px"><i class="fi">f</i><span class="n">run</span><span class="sg">.text</span><span class="a" style="letter-spacing:-0.23px">00000000000023C9</span></div>
<div class="r b" style="top:583px"><i class="fi">f</i><span class="n">main</span><span class="sg">.text</span><span class="a" style="letter-spacing:0.33px">0000000000002439</span></div>
<div class="r" style="top:597px"><i class="fi">f</i><span class="n">_term_proc</span><span class="sg">.fini</span><span class="a" style="letter-spacing:-0.19px">00000000000025A0</span></div>
<div class="r b pink" style="top:611px"><i class="fi">f</i><span class="n">__libc_start_main</span><span class="sg">extern</span><span class="a" style="letter-spacing:0.20px">0000000000005D10</span></div>
<div class="r b pink" style="top:625px"><i class="fi">f</i><span class="n">strncmp</span><span class="sg">extern</span><span class="a" style="letter-spacing:0.20px">0000000000005D18</span></div>
<div class="r pink" style="top:639px"><i class="fi">f</i><span class="n">__isoc23_sscanf</span><span class="sg">extern</span><span class="a" style="letter-spacing:-0.23px">0000000000005D20</span></div>
<div class="r b pink" style="top:653px"><i class="fi">f</i><span class="n">puts</span><span class="sg">extern</span><span class="a" style="letter-spacing:0.20px">0000000000005D28</span></div>
<div class="r pink" style="top:667px"><i class="fi">f</i><span class="n">__stack_chk_fail</span><span class="sg">extern</span><span class="a" style="letter-spacing:-0.23px">0000000000005D30</span></div>
<div class="r b pink" style="top:681px"><i class="fi">f</i><span class="n">printf</span><span class="sg">extern</span><span class="a" style="letter-spacing:0.20px">0000000000005D38</span></div>
<div class="r b pink" style="top:695px"><i class="fi">f</i><span class="n">memset</span><span class="sg">extern</span><span class="a" style="letter-spacing:0.20px">0000000000005D40</span></div>
<div class="r b pink" style="top:709px"><i class="fi">f</i><span class="n">strcspn</span><span class="sg">extern</span><span class="a" style="letter-spacing:0.20px">0000000000005D48</span></div>
<div class="r b pink" style="top:723px"><i class="fi">f</i><span class="n">srand</span><span class="sg">extern</span><span class="a" style="letter-spacing:0.20px">0000000000005D50</span></div>
<div class="r b pink" style="top:737px"><i class="fi">f</i><span class="n">fgets</span><span class="sg">extern</span><span class="a" style="letter-spacing:0.20px">0000000000005D58</span></div>
<div class="r b pink" style="top:751px"><i class="fi">f</i><span class="n">strcmp</span><span class="sg">extern</span><span class="a" style="letter-spacing:0.20px">0000000000005D60</span></div>
<div class="r b pink" style="top:765px"><i class="fi">f</i><span class="n">time</span><span class="sg">extern</span><span class="a" style="letter-spacing:0.20px">0000000000005D68</span></div>
<div class="r b pink" style="top:779px"><i class="fi">f</i><span class="n">setvbuf</span><span class="sg">extern</span><span class="a" style="letter-spacing:0.20px">0000000000005D70</span></div>
<div class="r b pink" style="top:793px"><i class="fi">f</i><span class="n">exit</span><span class="sg">extern</span><span class="a" style="letter-spacing:0.20px">0000000000005D78</span></div>
<div class="r b pink" style="top:807px"><i class="fi">f</i><span class="n">rand</span><span class="sg">extern</span><span class="a" style="letter-spacing:0.20px">0000000000005D80</span></div>
<div class="r b sel" style="top:821px"><i class="fi">f</i><span class="n">__imp___cxa_finalize</span><span class="sg">extern</span><span class="a" style="letter-spacing:0.20px">0000000000005D88</span></div>
<div class="r pink" style="top:835px"><i class="fi">f</i><span class="n">__gmon_start__</span><span class="sg">extern</span><span class="a" style="letter-spacing:-0.23px">0000000000005D98</span></div>
</div>
<div id="tabline"></div>
<div class="tab" style="left:516px;width:338px"></div>
<div class="tab" style="left:1197px;width:340px"></div>
<div class="tab" style="left:1536px;width:80px"></div>
<div class="tab act" style="left:853px;width:345px"></div>
<span class="ui" style="left:635px;top:103px">IDA View-A</span>
<span class="ui" style="left:966px;top:101px;-webkit-text-stroke-color:#fafafa">Pseudocode-A</span>
<span class="ui" style="left:1316px;top:103px">Hex View-1</span>
<div id="code">
<div id="gut"></div>
<div class="ln l1" style="top:126px"><span class="no">1</span><span class="tx"><span class="k">int __fastcall main(int argc, const char **argv, const char **envp)</span></span></div>
<div class="ln" style="top:149px"><span class="no">2</span><span class="tx"><span class="k">{</span></span></div>
<div class="ln" style="top:172px"><i class="dot"></i><span class="no">3</span><span class="tx"><span class="k">  </span><span class="g">setbufs</span><span class="k">(</span><span class="p">argc</span><span class="k">, </span><span class="p">argv</span><span class="k">, </span><span class="p">envp</span><span class="k">);</span></span></div>
<div class="ln" style="top:195px"><i class="dot"></i><span class="no">4</span><span class="tx"><span class="k">  </span><span class="g">init</span><span class="k">();</span></span></div>
<div class="ln" style="top:218px"><i class="dot"></i><span class="no">5</span><span class="tx"><span class="k">  while ( 1 )</span></span></div>
<div class="ln" style="top:241px"><span class="no">6</span><span class="tx"><span class="k">  {</span></span></div>
<div class="ln" style="top:264px"><i class="dot"></i><span class="no">7</span><span class="tx"><span class="k">    </span><span class="f">printf</span><span class="k">(</span><span class="s">"&gt; "</span><span class="k">);</span></span></div>
<div class="ln" style="top:287px"><i class="dot"></i><span class="no">8</span><span class="tx"><span class="k">    if ( !</span><span class="f">fgets</span><span class="k">(</span><span class="g">input_buffer</span><span class="k">, 1024, </span><span class="g">stdin</span><span class="k">) )</span></span></div>
<div class="ln" style="top:310px"><i class="dot"></i><span class="no">9</span><span class="tx"><span class="k">      break;</span></span></div>
<div class="ln" style="top:333px"><i class="dot"></i><span class="no">10</span><span class="tx"><span class="k">    </span><span class="g">input_buffer</span><span class="k">[</span><span class="f">strcspn</span><span class="k">(</span><span class="g">input_buffer</span><span class="k">, </span><span class="s">"\n"</span><span class="k">)] = 0;</span></span></div>
<div class="ln" style="top:356px"><i class="dot"></i><span class="no">11</span><span class="tx"><span class="k">    if ( !</span><span class="f">strcmp</span><span class="k">(</span><span class="g">input_buffer</span><span class="k">, </span><span class="s">"run"</span><span class="k">) )</span></span></div>
<div class="ln" style="top:379px"><span class="no">12</span><span class="tx"><span class="k">    {</span></span></div>
<div class="ln" style="top:402px"><i class="dot"></i><span class="no">13</span><span class="tx"><span class="k">      </span><span class="g">run</span><span class="k">();</span></span></div>
<div class="ln" style="top:425px"><i class="dot"></i><span class="no">14</span><span class="tx"><span class="k">      return 0;</span></span></div>
<div class="ln" style="top:448px"><span class="no">15</span><span class="tx"><span class="k">    }</span></span></div>
<div class="ln" style="top:471px"><i class="dot"></i><span class="no">16</span><span class="tx"><span class="k">    if ( !</span><span class="f">strcmp</span><span class="k">(</span><span class="g">input_buffer</span><span class="k">, </span><span class="s">"help"</span><span class="k">) )</span></span></div>
<div class="ln" style="top:494px"><span class="no">17</span><span class="tx"><span class="k">    {</span></span></div>
<div class="ln" style="top:517px"><i class="dot"></i><span class="no">18</span><span class="tx"><span class="k">      </span><span class="g">help</span><span class="k">();</span></span></div>
<div class="ln" style="top:540px"><span class="no">19</span><span class="tx"><span class="k">    }</span></span></div>
<div class="ln" style="top:563px"><span class="no">20</span><span class="tx"><span class="k">    else</span></span></div>
<div class="ln" style="top:586px"><span class="no">21</span><span class="tx"><span class="k">    {</span></span></div>
<div class="ln" style="top:609px"><i class="dot"></i><span class="no">22</span><span class="tx"><span class="k">      if ( !</span><span class="f">strcmp</span><span class="k">(</span><span class="g">input_buffer</span><span class="k">, </span><span class="s">"exit"</span><span class="k">) )</span></span></div>
<div class="ln" style="top:632px"><i class="dot"></i><span class="no">23</span><span class="tx"><span class="k">        return 0;</span></span></div>
<div class="ln" style="top:655px"><i class="dot"></i><span class="no">24</span><span class="tx"><span class="k">      if ( !</span><span class="f">strcmp</span><span class="k">(</span><span class="g">input_buffer</span><span class="k">, </span><span class="s">"dbg"</span><span class="k">) )</span></span></div>
<div class="ln" style="top:678px"><span class="no">25</span><span class="tx"><span class="k">      {</span></span></div>
<div class="ln" style="top:701px"><i class="dot"></i><span class="no">26</span><span class="tx"><span class="k">        </span><span class="f">printf</span><span class="k">(</span><span class="s">"[*] rand_slot = %d\n"</span><span class="k">, </span><span class="g">rand_slot</span><span class="k">);</span></span></div>
<div class="ln" style="top:724px"><span class="no">27</span><span class="tx"><span class="k">      }</span></span></div>
<div class="ln" style="top:747px"><i class="dot"></i><span class="no">28</span><span class="tx"><span class="k">      else if ( !</span><span class="f">strncmp</span><span class="k">(</span><span class="g">input_buffer</span><span class="k">, </span><span class="s">"inst "</span><span class="k">, 5u) )</span></span></div>
<div class="ln" style="top:770px"><span class="no">29</span><span class="tx"><span class="k">      {</span></span></div>
<div class="ln" style="top:793px"><i class="dot"></i><span class="no">30</span><span class="tx"><span class="k">        </span><span class="g">addInst</span><span class="k">(</span><span class="g">input_buffer</span><span class="k">);</span></span></div>
<div class="ln" style="top:816px"><span class="no">31</span><span class="tx"><span class="k">      }</span></span></div>
<div class="ln" style="top:839px"><span class="no">32</span><span class="tx"><span class="k">    }</span></span></div>
<div class="ln" style="top:862px"><span class="no">33</span><span class="tx"><span class="k">  }</span></span></div>
</div>
<svg style="left:4px;top:99px" width="16" height="16" viewBox="0 0 16 16"><rect x=".5" y=".5" width="15" height="15" rx="1.300" fill="#f4f4f4" stroke="#707070" stroke-width=".9"/><rect x="1" y="1" width="14" height="2.400" fill="#10d4ff"/><text x="8" y="12.300" font-family="Liberation Serif,serif" font-size="10.500" font-style="italic" font-weight="bold" text-anchor="middle" fill="#222">f</text></svg>
<svg style="left:430px;top:101px" width="16" height="15" viewBox="0 0 16 15"><rect x=".800" y=".800" width="13.600" height="13.200" fill="none" stroke="#3a3a3a" stroke-width="1.500"/><rect x=".200" y=".100" width="14.800" height="3.200" fill="#3a3a3a"/></svg>
<svg style="left:461px;top:101px" width="14" height="14" viewBox="0 0 14 14"><path d="M3.800 3.600V.900h8.600v7.400H9.700" fill="none" stroke="#3a3a3a" stroke-width="1.500"/><rect x="3.800" y=".200" width="9.400" height="2.400" fill="#3a3a3a"/><rect x=".900" y="5.300" width="8" height="7.200" fill="none" stroke="#3a3a3a" stroke-width="1.500"/><rect x=".200" y="4.600" width="9.400" height="2.400" fill="#3a3a3a"/></svg>
<svg style="left:489px;top:102px" width="13" height="13" viewBox="0 0 13 13"><path d="M1.200 1.400l10 10M11.200 1.400l-10 10" stroke="#333" stroke-width="2.100"/></svg>
<svg style="left:532px;top:102px" width="16" height="16" viewBox="0 0 16 16"><rect x=".5" y=".5" width="15" height="15" rx="1.500" fill="#fdfdfd" stroke="#808080" stroke-width="1"/><rect x="1" y="1" width="14" height="2.300" fill="#10d8ff"/><rect x="2.200" y="4.200" width="11.600" height="10.600" rx="1" fill="#c4c4c4"/><rect x="3.500" y="4.800" width="9" height="9.400" rx="1.200" fill="#ececec"/><circle cx="5.100" cy="6.4" r=".750" fill="#1878c0"/><path d="M6.900 6.4h4.400" stroke="#111" stroke-width="1"/><circle cx="5.100" cy="8.45" r=".750" fill="#1878c0"/><path d="M6.900 8.45h4.400" stroke="#111" stroke-width="1"/><circle cx="5.100" cy="10.5" r=".750" fill="#1878c0"/><path d="M6.900 10.5h4.400" stroke="#111" stroke-width="1"/><circle cx="5.100" cy="12.55" r=".750" fill="#1878c0"/><path d="M6.900 12.55h4.400" stroke="#111" stroke-width="1"/></svg>
<svg style="left:873px;top:100px" width="16" height="16" viewBox="0 0 16 16"><rect x=".5" y=".5" width="15" height="15" rx="1.500" fill="#fdfdfd" stroke="#808080" stroke-width="1"/><rect x="1" y="1" width="14" height="2.300" fill="#10d8ff"/><rect x="2.200" y="4.200" width="11.600" height="10.600" rx="1" fill="#c4c4c4"/><rect x="3.500" y="4.800" width="9" height="9.400" rx="1.200" fill="#ececec"/><circle cx="5.100" cy="6.4" r=".750" fill="#1878c0"/><path d="M6.900 6.4h4.400" stroke="#111" stroke-width="1"/><circle cx="5.100" cy="8.45" r=".750" fill="#1878c0"/><path d="M6.900 8.45h4.400" stroke="#111" stroke-width="1"/><circle cx="5.100" cy="10.5" r=".750" fill="#1878c0"/><path d="M6.900 10.5h4.400" stroke="#111" stroke-width="1"/><circle cx="5.100" cy="12.55" r=".750" fill="#1878c0"/><path d="M6.900 12.55h4.400" stroke="#111" stroke-width="1"/></svg>
<svg style="left:817px;top:104px" width="14" height="14" viewBox="0 0 14 14"><rect x=".6" y=".6" width="12.800" height="12.800" rx="2" fill="#c4c4c4" stroke="#a8a8a8" stroke-width="1"/><path d="M4.200 4.200l5.600 5.600M9.800 4.200l-5.600 5.600" stroke="#fff" stroke-width="2"/></svg>
<svg style="left:1158px;top:102px" width="14" height="14" viewBox="0 0 14 14"><rect x=".6" y=".6" width="12.800" height="12.800" rx="2" fill="#e8845a" stroke="#e0402c" stroke-width="1"/><path d="M4.200 4.200l5.600 5.600M9.800 4.200l-5.600 5.600" stroke="#fff" stroke-width="2"/></svg>
<svg style="left:1499px;top:104px" width="14" height="14" viewBox="0 0 14 14"><rect x=".6" y=".6" width="12.800" height="12.800" rx="2" fill="#c4c4c4" stroke="#a8a8a8" stroke-width="1"/><path d="M4.200 4.200l5.600 5.600M9.800 4.200l-5.600 5.600" stroke="#fff" stroke-width="2"/></svg>
<svg style="left:1214px;top:102px" width="16" height="16" viewBox="0 0 16 16"><rect x=".5" y=".5" width="15" height="15" rx="1.300" fill="#f6f6f6" stroke="#707070" stroke-width=".9"/><rect x="1" y="1" width="14" height="2.300" fill="#10d8ff"/><circle cx="8" cy="9.600" r="4.600" fill="#fff" stroke="#222" stroke-width="1"/><path d="M4.200 12.200q3.800 3.400 7.600 0l-1.600-2.600H5.800z" fill="#222"/><ellipse cx="8" cy="11.600" rx="1.400" ry="2" fill="#50e090"/></svg>
<svg style="left:1555px;top:102px" width="16" height="16" viewBox="0 0 16 16"><rect x=".5" y=".5" width="15" height="15" rx="1.300" fill="#f6f6f6" stroke="#707070" stroke-width=".9"/><rect x="1" y="1" width="14" height="2.300" fill="#10d8ff"/><circle cx="8" cy="9.600" r="5" fill="#161616"/><text x="8" y="13.200" font-family="Liberation Serif,serif" font-size="10" font-weight="bold" text-anchor="middle" fill="#fff">t</text></svg>
</body></html>
